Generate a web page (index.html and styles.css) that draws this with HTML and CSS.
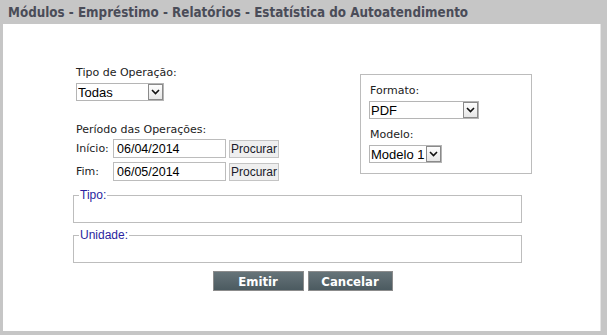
FILE: index.html
```html
<!DOCTYPE html>
<html lang="pt-BR">
<head>
    <meta charset="UTF-8">
    <title>Estatística do Autoatendimento</title>
    <link rel="stylesheet" href="styles.css">
</head>
<body>
    <div class="header">Módulos - Empréstimo - Relatórios - Estatística do Autoatendimento</div>

    <div class="panel">
        <form class="report">
            <div class="top-row">
                <!-- Filtros -->
                <div class="filters">
                    <label class="caption">Tipo de Operação:</label>
                    <span class="combo combo-tipo">
                        <select>
                            <option>Todas</option>
                        </select>
                        <span class="arrow"><svg width="9" height="6" viewBox="0 0 9 6"><path d="M1 1 L4.5 4.5 L8 1" fill="none" stroke="#111" stroke-width="1.6"/></svg></span>
                    </span>

                    <label class="caption periodo">Período das Operações:</label>
                    <div class="date-row">
                        <span class="date-label">Início:</span>
                        <input type="text" class="date" value="06/04/2014">
                        <button type="button" class="btn-find">Procurar</button>
                    </div>
                    <div class="date-row">
                        <span class="date-label">Fim:</span>
                        <input type="text" class="date" value="06/05/2014">
                        <button type="button" class="btn-find">Procurar</button>
                    </div>
                </div>

                <!-- Formato / Modelo -->
                <div class="output-box">
                    <label class="caption">Formato:</label>
                    <span class="combo combo-formato">
                        <select>
                            <option>PDF</option>
                        </select>
                        <span class="arrow"><svg width="9" height="6" viewBox="0 0 9 6"><path d="M1 1 L4.5 4.5 L8 1" fill="none" stroke="#111" stroke-width="1.6"/></svg></span>
                    </span>
                    <label class="caption modelo">Modelo:</label>
                    <span class="combo combo-modelo">
                        <select>
                            <option>Modelo 1</option>
                        </select>
                        <span class="arrow"><svg width="9" height="6" viewBox="0 0 9 6"><path d="M1 1 L4.5 4.5 L8 1" fill="none" stroke="#111" stroke-width="1.6"/></svg></span>
                    </span>
                </div>
            </div>

            <fieldset class="group">
                <legend>Tipo:</legend>
            </fieldset>
            <fieldset class="group">
                <legend>Unidade:</legend>
            </fieldset>

            <div class="actions">
                <button type="button" class="btn-main btn-emitir">Emitir</button>
                <button type="button" class="btn-main btn-cancelar">Cancelar</button>
            </div>
        </form>
    </div>
</body>
</html>
```

FILE: styles.css
```css
body {
    margin: 0;
    background-color: #c6c6c6;
    font-family: "DejaVu Sans", Verdana, sans-serif;
    font-size: 11px;
    color: #222;
}
.header {
    height: 24px;
    line-height: 25px;
    padding-left: 8px;
    font-family: "DejaVu Sans Condensed", "DejaVu Sans", sans-serif;
    font-weight: bold;
    font-size: 13.3px;
    color: #4a4c58;
}
.panel {
    margin: 0 6px 0 3px;
    height: 307px;
    background-color: #fff;
    border-right: 1px solid #e4e4e4;
}
.report {
    padding: 42px 0 0 70px;
    width: 449px;
}
.top-row {
    display: flex;
    justify-content: space-between;
    align-items: flex-start;
}
.filters {
    padding-left: 3px;
}
.caption {
    display: block;
    line-height: 14px;
    margin-bottom: 3px;
}
.periodo {
    margin-top: 22px;
    margin-bottom: 0;
}
.combo {
    position: relative;
    display: block;
    height: 18px;
}
.combo select {
    appearance: none;
    -webkit-appearance: none;
    display: block;
    height: 18px;
    border: 1px solid #b5b5b5;
    border-radius: 0;
    background: #fff;
    padding: 0 0 0 1px;
    font-family: "Liberation Sans", Arial, sans-serif;
    font-size: 13px;
    color: #000;
}
.combo .arrow {
    position: absolute;
    top: 1px;
    right: 1px;
    width: 13px;
    height: 14px;
    border: 1px solid #8a8a8a;
    background: linear-gradient(#fdfdfd, #e6e6e6);
    display: flex;
    align-items: center;
    justify-content: center;
}
.combo-tipo, .combo-tipo select { width: 88px; }
.combo-formato, .combo-formato select { width: 110px; }
.combo-modelo, .combo-modelo select { width: 73px; }
.date-row {
    display: flex;
    align-items: center;
    height: 23px;
}
.date-label {
    width: 37px;
}
.date {
    width: 113px;
    height: 19px;
    box-sizing: border-box;
    border: 1px solid #bcbcbc;
    padding: 0 3px;
    font-family: "Liberation Sans", Arial, sans-serif;
    font-size: 12.5px;
    color: #000;
}
.btn-find {
    margin-left: 3px;
    height: 18px;
    width: 50px;
    padding: 0;
    border: 1px solid #c4c4c4;
    background-color: #efefef;
    font-family: "Liberation Sans", Arial, sans-serif;
    font-size: 12px;
    color: #1a1a2a;
}
.output-box {
    flex: none;
    width: 153px;
    margin-top: 8px;
    margin-right: -10px;
    border: 1px solid #bcbcbc;
    padding: 9px 9px 10px 8px;
}
.output-box .caption {
    margin-left: 1px;
}
.modelo {
    margin-top: 9px;
}
.group {
    margin: 5px 0 0 0;
    padding: 0;
    height: 35px;
    box-sizing: border-box;
    border: 1px solid #bdbdbd;
}
.group + .group {
    margin-top: 5px;
}
.group legend {
    margin-left: 5px;
    padding: 0 1px;
    line-height: 14px;
    font-family: "Liberation Sans", Arial, sans-serif;
    font-size: 12px;
    color: #2a1fa0;
}
.actions {
    display: flex;
    justify-content: center;
    gap: 4px;
    margin-top: 8px;
    padding-left: 10px;
}
.btn-main {
    height: 20px;
    padding: 0;
    border: 1px solid #8c8c8c;
    background: linear-gradient(#667479, #4b5a60);
    color: #fff;
    font-family: "DejaVu Sans Condensed", "DejaVu Sans", sans-serif;
    font-weight: bold;
    font-size: 13px;
}
.btn-emitir { width: 91px; }
.btn-cancelar { width: 85px; }
```
